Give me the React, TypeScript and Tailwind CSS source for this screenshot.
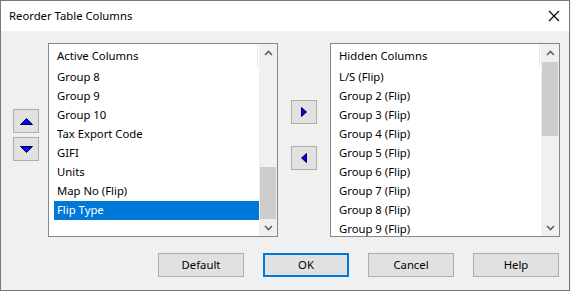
import React from 'react';

const activeColumns = ['Group 8', 'Group 9', 'Group 10', 'Tax Export Code', 'GIFI', 'Units', 'Map No (Flip)', 'Flip Type'];
const hiddenColumns = ['L/S (Flip)', 'Group 2 (Flip)', 'Group 3 (Flip)', 'Group 4 (Flip)', 'Group 5 (Flip)', 'Group 6 (Flip)', 'Group 7 (Flip)', 'Group 8 (Flip)', 'Group 9 (Flip)'];

const Chevron: React.FC<{ down?: boolean }> = ({ down }) => (
  <svg width="9" height="6" viewBox="0 0 9 6" className={down ? 'rotate-180' : ''}>
    <path d="M1 5 L4.5 1.5 L8 5" fill="none" stroke="#606060" strokeWidth="1.6" />
  </svg>
);

const Arrow: React.FC<{ dir: 'up' | 'down' | 'left' | 'right' }> = ({ dir }) => {
  const paths = {
    up: 'M0.5 6.5 L6.5 0.5 L12.5 6.5 Z',
    down: 'M0.5 0.5 L6.5 6.5 L12.5 0.5 Z',
    right: 'M0.5 0.5 L5.5 5 L0.5 9.5 Z',
    left: 'M5.5 0.5 L0.5 5 L5.5 9.5 Z',
  };
  const vertical = dir === 'up' || dir === 'down';
  return (
    <svg width={vertical ? 13 : 6} height={vertical ? 7 : 10} viewBox={vertical ? '0 0 13 7' : '0 0 6 10'}>
      <path d={paths[dir]} fill="#0000ff" stroke="#00003a" strokeWidth="1" strokeLinejoin="miter" />
    </svg>
  );
};

const SmallButton: React.FC<{ dir: 'up' | 'down' | 'left' | 'right' }> = ({ dir }) => (
  <div className="w-[26px] h-[24px] bg-[#e1e1e1] border border-[#adadad] flex items-center justify-center">
    <Arrow dir={dir} />
  </div>
);

const ListBox: React.FC<{ title: string; items: string[]; selected?: number; thumbTop: number; thumbHeight: number }> = ({ title, items, selected, thumbTop, thumbHeight }) => (
  <div className="w-[230px] h-[194px] border border-[#828790] bg-white flex overflow-hidden">
    <div className="flex-1 flex flex-col overflow-hidden">
      <div className="h-[24px] shrink-0 flex items-center pl-[8px] relative">
        <span>{title}</span>
        <div className="absolute right-[1px] top-0 h-[23px] w-px bg-[#e5e5e5]" />
      </div>
      {items.map((item, i) => (
        <div
          key={item}
          className={`h-[19px] shrink-0 flex items-center pl-[3px] ml-[5px] ${i === selected ? 'bg-[#0078d7] text-white' : ''}`}
        >
          {item}
        </div>
      ))}
    </div>
    <div className="w-[18px] shrink-0 bg-[#f0f0f0] flex flex-col">
      <div className="h-[17px] flex items-center justify-center">
        <Chevron />
      </div>
      <div className="flex-1 relative">
        <div className="absolute left-[1px] right-[1px] bg-[#cdcdcd]" style={{ top: thumbTop, height: thumbHeight }} />
      </div>
      <div className="h-[17px] flex items-center justify-center">
        <Chevron down />
      </div>
    </div>
  </div>
);

const DialogButton: React.FC<{ label: string; primary?: boolean }> = ({ label, primary }) => (
  <div
    className={`w-[86px] h-[24px] bg-[#e1e1e1] flex items-center justify-center ${primary ? 'border-2 border-[#0078d7]' : 'border border-[#adadad]'}`}
  >
    {label}
  </div>
);

export default function App() {
  return (
    <div className="w-[571px] h-[291px] bg-[#f0f0f0] text-[11.3px] text-black" style={{ fontFamily: '"Noto Sans", "Open Sans", sans-serif' }}>
      <div className="w-[570px] h-[291px] border border-[#7a7a7a] flex flex-col">
        <div className="h-[30px] shrink-0 bg-white flex items-center justify-between pl-[8px] pr-[9px]">
          <span>Reorder Table Columns</span>
          <svg width="12" height="12" viewBox="0 0 12 12">
            <path d="M1 1 L11 11 M11 1 L1 11" stroke="#000" strokeWidth="1.1" />
          </svg>
        </div>
        <div className="flex-1 flex flex-col bg-[#f0f0f0]">
          <div className="flex items-start mt-[12px]">
            <div className="ml-[12px] mt-[66px] flex flex-col gap-[4px]">
              <SmallButton dir="up" />
              <SmallButton dir="down" />
            </div>
            <div className="ml-[9px]">
              <ListBox title="Active Columns" items={activeColumns} selected={7} thumbTop={106} thumbHeight={52} />
            </div>
            <div className="ml-[13px] mt-[57px] flex flex-col gap-[22px]">
              <SmallButton dir="right" />
              <SmallButton dir="left" />
            </div>
            <div className="ml-[13px]">
              <ListBox title="Hidden Columns" items={hiddenColumns} thumbTop={1} thumbHeight={74} />
            </div>
          </div>
          <div className="flex mt-[16px] ml-[157px] gap-[19px]">
            <DialogButton label="Default" />
            <DialogButton label="OK" primary />
            <DialogButton label="Cancel" />
            <DialogButton label="Help" />
          </div>
        </div>
      </div>
    </div>
  );
}
